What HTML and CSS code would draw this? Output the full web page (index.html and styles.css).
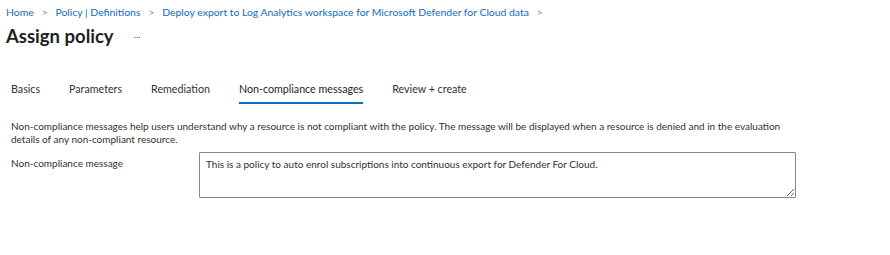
FILE: index.html
```html
<!DOCTYPE html>
<html lang="en">
<head>
  <meta charset="UTF-8" />
  <title>Assign policy</title>
  <link rel="stylesheet" href="styles.css">
</head>
<body>
  <div class="blade">
    <nav class="crumbs">
      <a href="#">Home</a><span class="sep">&gt;</span>
      <a href="#">Policy | Definitions</a><span class="sep">&gt;</span>
      <a href="#">Deploy export to Log Analytics workspace for Microsoft Defender for Cloud data</a><span class="sep">&gt;</span>
    </nav>
    <div class="title-row">
      <h1>Assign policy</h1>
      <span class="more">...</span>
    </div>

    <div class="tabs">
      <span class="tab">Basics</span>
      <span class="tab">Parameters</span>
      <span class="tab">Remediation</span>
      <span class="tab active">Non-compliance messages</span>
      <span class="tab">Review + create</span>
    </div>

    <p class="desc">Non-compliance messages help users understand why a resource is not compliant with the policy. The message will be displayed when a resource is denied and in the evaluation details of any non-compliant resource.</p>

    <div class="field">
      <label class="field-label">Non-compliance message</label>
      <textarea class="msg">This is a policy to auto enrol subscriptions into continuous export for Defender For Cloud.</textarea>
    </div>
  </div>
</body>
</html>
```

FILE: styles.css
```css
* { box-sizing: border-box; margin: 0; padding: 0; }
html, body {
  background: #fff;
  color: #323130;
  font-family: 'Lato', 'Noto Sans', sans-serif;
}
.blade {
  padding: 4px 6px;
}
.crumbs {
  font-size: 10.4px;
  line-height: 16px;
  display: flex;
  align-items: center;
}
.crumbs a {
  color: #0f6cbd;
  text-decoration: none;
}
.crumbs .sep {
  color: #8a8886;
  margin: 0 8px;
  font-size: 10px;
}
.title-row {
  display: flex;
  align-items: center;
  margin-top: 4px;
  height: 24px;
}
h1 {
  font-size: 18.5px;
  font-weight: 700;
  color: #201f1e;
}
.more {
  margin-left: 20px;
  font-size: 10px;
  color: #605e5c;
  position: relative;
  top: -2px;
}
.tabs {
  display: flex;
  margin: 34px 0 0 5px;
  gap: 29px;
}
.tab {
  font-size: 10.7px;
  line-height: 14px;
  padding-bottom: 6px;
  border-bottom: 2px solid transparent;
  color: #323130;
}
.tab.active {
  border-bottom-color: #0f6cbd;
  color: #201f1e;
}
.desc {
  font-size: 10px;
  line-height: 13px;
  margin: 16px 0 0 5px;
  max-width: 778px;
}
.field {
  display: flex;
  margin: 6px 0 0 5px;
}
.field-label {
  width: 188px;
  font-size: 10px;
  padding-top: 5px;
}
.msg {
  width: 597px;
  height: 46px;
  border: 1px solid #8a8886;
  border-radius: 1px;
  font-family: inherit;
  font-size: 10px;
  color: #323130;
  padding: 5px 6px;
  resize: vertical;
}
```
